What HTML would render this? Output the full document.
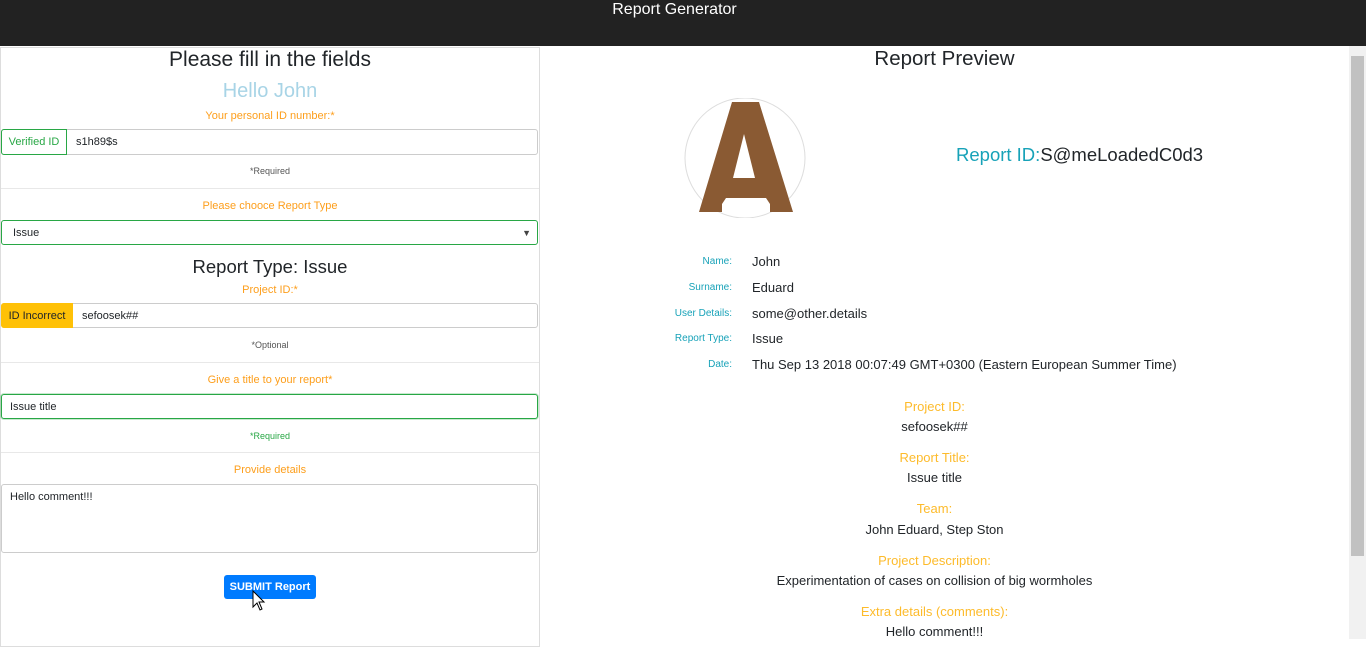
<!DOCTYPE html>
<html><head><style>
*{box-sizing:border-box;margin:0;padding:0}
body{width:1366px;height:639px;overflow:hidden;font-family:"Liberation Sans",sans-serif;background:#fff;position:relative;color:#212529}
.a{position:absolute}
.c{text-align:center}
.or{color:#fd9e1b;font-size:11px}
.sm{font-size:9px;color:#555}
.inp{position:absolute;border:1px solid #ccc;border-radius:3px;font-size:11px;padding-left:8px;display:flex;align-items:center;background:#fff}
.hr{position:absolute;left:1px;width:538px;border-top:1px solid #e8e8e8}
.lb{position:absolute;width:90px;text-align:right;left:642px;font-size:10px;color:#17a2b8}
.vl{position:absolute;left:752px;font-size:13px}
.ot{position:absolute;left:530px;width:809px;text-align:center;color:#fdbb2b;font-size:13px}
.vt{position:absolute;left:530px;width:809px;text-align:center;font-size:13px}
</style></head><body>
<div class="a" style="left:0;top:0;width:1366px;height:46px;background:#222"></div>
<div class="a c" style="left:0;top:1px;width:1349px;color:#fff;font-size:16px">Report Generator</div>
<div class="a" style="left:1349px;top:46px;width:17px;height:593px;background:#f1f1f1"></div>
<div class="a" style="left:1351px;top:56px;width:13px;height:500px;background:#c1c1c1"></div>
<div class="a" style="left:0;top:47px;width:540px;height:600px;border:1px solid #ddd"></div>

<div class="a c" style="left:0;top:48px;width:540px;font-size:21px">Please fill in the fields</div>
<div class="a c" style="left:0;top:80px;width:540px;font-size:20px;color:#a8d4e6">Hello John</div>
<div class="a c or" style="left:0;top:110px;width:540px">Your personal ID number:*</div>
<div class="inp" style="left:1px;top:129px;width:537px;height:26px;padding-left:74px">s1h89$s</div>
<div class="a" style="left:1px;top:129px;width:66px;height:26px;border:1px solid #28a745;border-radius:3px 0 0 3px;color:#28a745;font-size:11px;display:flex;align-items:center;justify-content:center">Verified ID</div>
<div class="a c sm" style="left:0;top:166px;width:540px">*Required</div>
<div class="hr" style="top:188px"></div>
<div class="a c or" style="left:0;top:200px;width:540px">Please chooce Report Type</div>
<div class="inp" style="left:1px;top:220px;width:537px;height:25px;border-color:#28a745;padding-left:11px">Issue<span style="position:absolute;right:6px;font-size:9px;color:#444">▼</span></div>
<div class="a c" style="left:0;top:256px;width:540px;font-size:18.5px">Report Type: Issue</div>
<div class="a c or" style="left:0;top:284px;width:540px">Project ID:*</div>
<div class="inp" style="left:1px;top:303px;width:537px;height:25px;padding-left:80px">sefoosek##</div>
<div class="a" style="left:1px;top:303px;width:72px;height:25px;background:#ffc107;border-radius:3px 0 0 3px;font-size:11px;display:flex;align-items:center;justify-content:center">ID Incorrect</div>
<div class="a c sm" style="left:0;top:340px;width:540px">*Optional</div>
<div class="hr" style="top:362px"></div>
<div class="a c or" style="left:0;top:374px;width:540px">Give a title to your report*</div>
<div class="inp" style="left:1px;top:394px;width:537px;height:25px;border-color:#28a745;box-shadow:0 0 0 1px rgba(40,167,69,.25);padding-left:8px">Issue title</div>
<div class="a c sm" style="left:0;top:431px;width:540px;color:#28a745">*Required</div>
<div class="hr" style="top:452px"></div>
<div class="a c or" style="left:0;top:464px;width:540px">Provide details</div>
<div class="inp" style="left:1px;top:484px;width:537px;height:69px;align-items:flex-start;padding-top:6px">Hello comment!!!</div>
<div class="a" style="left:224px;top:575px;width:92px;height:24px;background:#007bff;border-radius:3px;color:#fff;font-size:11px;font-weight:bold;display:flex;align-items:center;justify-content:center">SUBMIT Report</div>
<svg class="a" style="left:252px;top:590px" width="14" height="22" viewBox="0 0 14 22"><path d="M1 1 L1 17 L5 13 L8 20 L10 19 L7 12 L12 12 Z" fill="#fff" stroke="#000" stroke-width="1"/></svg>

<div class="a c" style="left:540px;top:47px;width:809px;font-size:20.5px">Report Preview</div>
<svg class="a" style="left:683px;top:98px" width="124" height="120" viewBox="0 0 124 120">
<circle cx="62" cy="60" r="60" fill="#fff" stroke="#ddd"/>
<path d="M49 4 L76 4 L110 114 L87 114 L87 106 L83 100 L43 100 L39 106 L39 114 L16 114 Z M61 36 L50 80 L72 80 Z" fill="#8a5a33" fill-rule="evenodd"/>
</svg>
<div class="a" style="left:956px;top:144px;font-size:18.5px"><span style="color:#17a2b8">Report ID:</span>S@meLoadedC0d3</div>
<div class="lb" style="top:256px">Name:</div><div class="vl" style="top:254px">John</div>
<div class="lb" style="top:282px">Surname:</div><div class="vl" style="top:280px">Eduard</div>
<div class="lb" style="top:308px">User Details:</div><div class="vl" style="top:306px">some@other.details</div>
<div class="lb" style="top:333px">Report Type:</div><div class="vl" style="top:331px">Issue</div>
<div class="lb" style="top:359px">Date:</div><div class="vl" style="top:357px">Thu Sep 13 2018 00:07:49 GMT+0300 (Eastern European Summer Time)</div>
<div class="ot" style="top:399px">Project ID:</div><div class="vt" style="top:419px">sefoosek##</div>
<div class="ot" style="top:450px">Report Title:</div><div class="vt" style="top:470px">Issue title</div>
<div class="ot" style="top:501px">Team:</div><div class="vt" style="top:522px">John Eduard, Step Ston</div>
<div class="ot" style="top:553px">Project Description:</div><div class="vt" style="top:573px">Experimentation of cases on collision of big wormholes</div>
<div class="ot" style="top:604px">Extra details (comments):</div><div class="vt" style="top:624px">Hello comment!!!</div>
</body></html>
